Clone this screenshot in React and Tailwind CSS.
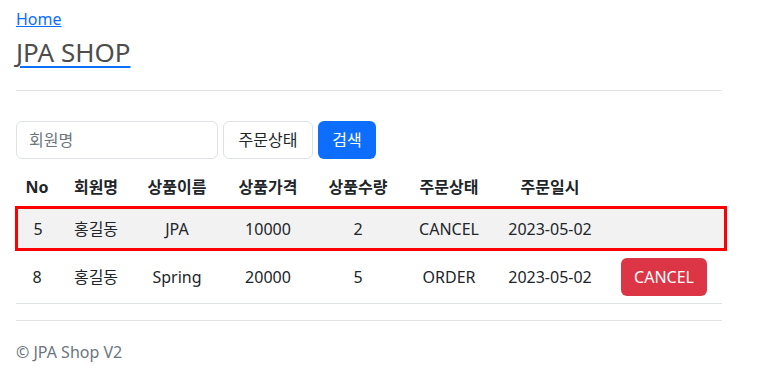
export default function App() {
  const orders = [
    { id: 5, member: '홍길동', item: 'JPA', price: 10000, count: 2, status: 'CANCEL', date: '2023-05-02', selected: true },
    { id: 8, member: '홍길동', item: 'Spring', price: 20000, count: 5, status: 'ORDER', date: '2023-05-02' },
  ]

  const cols = ['w-[42px]', 'w-[76px]', 'w-[86px]', 'w-[96px]', 'w-[84px]', 'w-[98px]', 'w-[104px]', 'flex-1']

  return (
    <div className="min-h-[383px] bg-white px-4 pt-[7px] text-[16px] text-[#212529] font-['Noto_Sans','Noto_Sans_CJK_KR',sans-serif]">
      <div className="w-[706px]">
        {/* Header */}
        <a href="#" className="text-[#0d6efd] underline leading-6">Home</a>
        <h2 className="mt-[4px] text-[26px] leading-[34px] text-[#4d4d4d] underline decoration-[#0d6efd] decoration-2 underline-offset-[4px]">
          JPA SHOP
        </h2>
        <hr className="mt-[21px] border-t border-[#e2e2e2]" />

        {/* Search form */}
        <div className="mt-[30px] flex items-center gap-[5px]">
          <input
            placeholder="회원명"
            className="h-[38px] w-[202px] rounded-md border border-[#dee2e6] px-3 placeholder:text-[#6c757d] outline-none"
          />
          <div className="flex h-[38px] w-[90px] items-center justify-center rounded-md border border-[#dee2e6]">주문상태</div>
          <button className="h-[38px] w-[58px] rounded-md bg-[#0d6efd] text-white">검색</button>
        </div>

        {/* Orders */}
        <div className="mt-[9px]">
          <div className="flex h-[38px] items-center text-center font-bold">
            {['No', '회원명', '상품이름', '상품가격', '상품수량', '주문상태', '주문일시', ''].map((h, i) => (
              <div key={i} className={cols[i]}>{h}</div>
            ))}
          </div>
          {orders.map((o) => (
            <div
              key={o.id}
              className={
                o.selected
                  ? '-ml-px -mr-[5px] flex h-[45px] items-center border-[3px] border-[#ff0000] bg-[#f2f2f2] pr-[3px] text-center'
                  : 'flex h-[53px] items-center border-b border-[#dee2e6] text-center'
              }
            >
              <div className={o.selected ? 'w-[40px]' : cols[0]}>{o.id}</div>
              <div className={cols[1]}>{o.member}</div>
              <div className={cols[2]}>{o.item}</div>
              <div className={cols[3]}>{o.price}</div>
              <div className={cols[4]}>{o.count}</div>
              <div className={cols[5]}>{o.status}</div>
              <div className={cols[6]}>{o.date}</div>
              <div className="flex flex-1 justify-center">
                {o.status === 'ORDER' && (
                  <button className="ml-[4px] h-[38px] w-[86px] rounded-md bg-[#dc3545] text-white">CANCEL</button>
                )}
              </div>
            </div>
          ))}
        </div>

        <hr className="mt-[16px] border-t border-[#e2e2e2]" />
        <p className="mt-[19px] text-[#6c757d]">© JPA Shop V2</p>
      </div>
    </div>
  )
}
